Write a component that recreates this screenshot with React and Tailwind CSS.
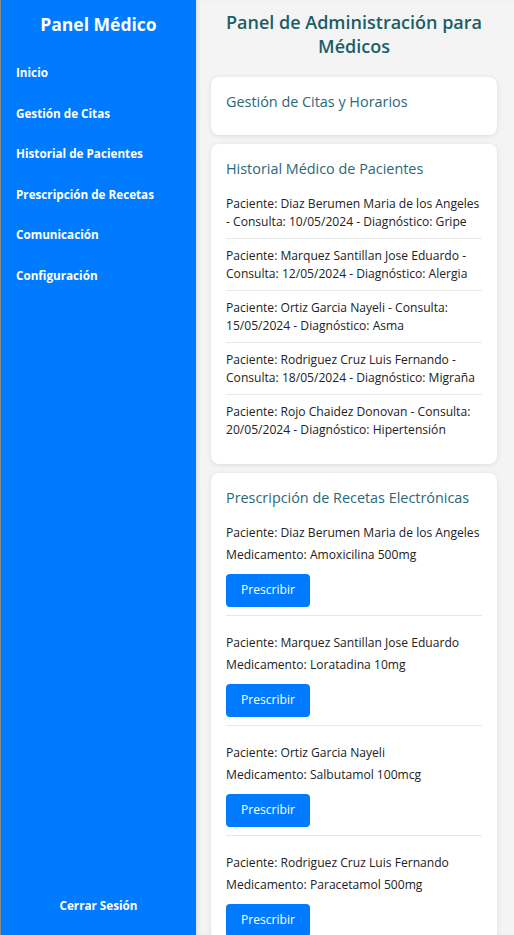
import React from "react";

const history = [
  "Paciente: Diaz Berumen Maria de los Angeles - Consulta: 10/05/2024 - Diagnóstico: Gripe",
  "Paciente: Marquez Santillan Jose Eduardo - Consulta: 12/05/2024 - Diagnóstico: Alergia",
  "Paciente: Ortiz Garcia Nayeli - Consulta: 15/05/2024 - Diagnóstico: Asma",
  "Paciente: Rodriguez Cruz Luis Fernando - Consulta: 18/05/2024 - Diagnóstico: Migraña",
  "Paciente: Rojo Chaidez Donovan - Consulta: 20/05/2024 - Diagnóstico: Hipertensión",
];

const recetas = [
  ["Diaz Berumen Maria de los Angeles", "Amoxicilina 500mg"],
  ["Marquez Santillan Jose Eduardo", "Loratadina 10mg"],
  ["Ortiz Garcia Nayeli", "Salbutamol 100mcg"],
  ["Rodriguez Cruz Luis Fernando", "Paracetamol 500mg"],
  ["Rojo Chaidez Donovan", "Losartán 50mg"],
];

const nav = [
  "Inicio",
  "Gestión de Citas",
  "Historial de Pacientes",
  "Prescripción de Recetas",
  "Comunicación",
  "Configuración",
];

export default function App() {
  return (
    <div
      className="flex h-[935px] w-full overflow-hidden bg-[#f4f4f4] text-[#222]"
      style={{ fontFamily: "'Open Sans', 'Noto Sans', sans-serif" }}
    >
      <aside className="flex w-[196px] shrink-0 flex-col border-l border-[#8a8a8a] bg-[#007bff] text-white">
        <h2 className="pt-[11px] text-center text-[17.5px] font-bold leading-[26px]">Panel Médico</h2>
        <nav className="mt-[15px] flex flex-col">
          {nav.map((n) => (
            <a key={n} className="block px-[15px] py-[11px] text-[11.7px] font-bold leading-[18.6px]">
              {n}
            </a>
          ))}
        </nav>
        <div className="mt-auto pb-[21px] text-center text-[11.7px] font-bold leading-[18px]">Cerrar Sesión</div>
      </aside>
      <main className="flex-1 overflow-hidden pl-[15px] pr-[17px] shadow-[inset_3px_0_4px_-2px_rgba(0,0,0,0.12)]">
        <h1 className="pt-[10px] text-center text-[18px] font-semibold leading-[24px] text-[#1b5e67]">
          Panel de Administración para Médicos
        </h1>
        <div className="mt-[19px] flex flex-col gap-[9px]">
          <section className="rounded-[8px] bg-white px-[15px] pb-[15px] pt-[15px] shadow-[0_1px_5px_rgba(0,0,0,0.1)]">
            <h3 className="mb-[8px] text-[14.4px] leading-[20px] text-[#2b6878]">Gestión de Citas y Horarios</h3>
          </section>
          <section className="rounded-[8px] bg-white px-[15px] pb-[18px] pt-[15px] shadow-[0_1px_5px_rgba(0,0,0,0.1)]">
            <h3 className="mb-[8px] text-[14.4px] leading-[20px] text-[#2b6878]">Historial Médico de Pacientes</h3>
            <ul>
              {history.map((h, i) => (
                <li
                  key={i}
                  className="border-b border-[#e8e8e8] py-[7.5px] text-[12.1px] leading-[18px] last:border-b-0"
                >
                  {h}
                </li>
              ))}
            </ul>
          </section>
          <section className="rounded-[8px] bg-white px-[15px] pb-[15px] pt-[15px] shadow-[0_1px_5px_rgba(0,0,0,0.1)]">
            <h3 className="mb-[8px] text-[14.4px] leading-[20px] text-[#2b6878]">Prescripción de Recetas Electrónicas</h3>
            <ul>
              {recetas.map(([p, m], i) => (
                <li key={i} className="border-b border-[#e8e8e8] pb-[8px] pt-[18px] first:pt-[8px]">
                  <p className="text-[12.1px] leading-[18px]">Paciente: {p}</p>
                  <p className="mt-[4px] text-[12.1px] leading-[18px]">Medicamento: {m}</p>
                  <button className="mt-[10px] h-[33px] w-[84px] rounded-[4px] bg-[#007bff] text-[12.1px] text-white">
                    Prescribir
                  </button>
                </li>
              ))}
            </ul>
          </section>
        </div>
      </main>
    </div>
  );
}
